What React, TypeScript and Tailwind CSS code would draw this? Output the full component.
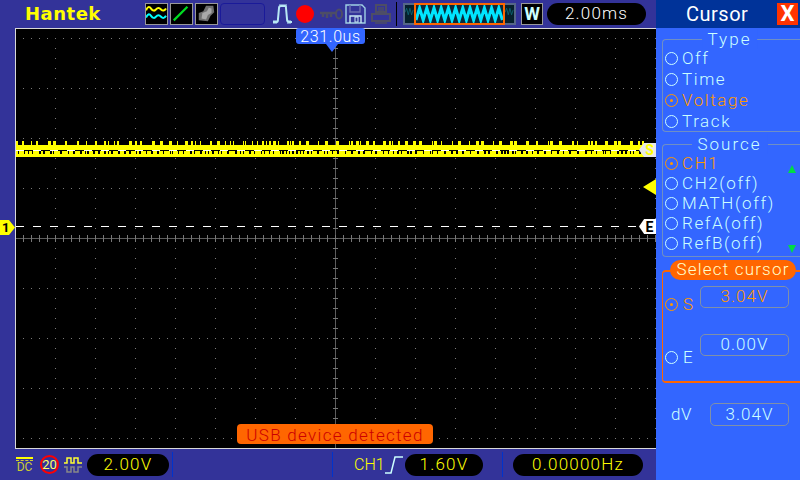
import React from 'react';

// Screen geometry: graticule centre sits at (319, 209) inside the svg
const SW = 640;
const SH = 419;

function rand(seed: number) {
  const x = Math.sin(seed * 12.9898) * 43758.5453;
  return x - Math.floor(x);
}

const Graticule = () => {
  const dots: React.ReactNode[] = [];
  for (let r = 0; r < 9; r++) {
    const y = 9 + r * 50;
    for (let x = 7; x < SW; x += 8) dots.push(<rect key={`h${r}-${x}`} x={x} y={y} width="1" height="1" fill="#7a7a7a" />);
  }
  for (let c = 1; c < 17; c++) {
    const x = c * 40 - 1;
    for (let y = 9; y < SH; y += 10) dots.push(<rect key={`v${c}-${y}`} x={x} y={y} width="1" height="1" fill="#7a7a7a" />);
  }
  const ticks: React.ReactNode[] = [];
  for (let x = 7; x < SW; x += 8) ticks.push(<rect key={`t${x}`} x={x} y={206} width="1" height="7" fill="#777" />);
  for (let y = 9; y < SH; y += 10) ticks.push(<rect key={`u${y}`} x={317} y={y} width="5" height="1" fill="#777" />);
  return (
    <>
      {dots}
      <rect x="0" y="209" width={SW} height="1" fill="#5c5c5c" />
      <rect x="319" y="0" width="1" height={SH} fill="#5c5c5c" />
      {ticks}
    </>
  );
};

// noisy blocks of a given height, used for the trace fuzz
const Fuzz = ({ y, h, seed, gap, maxW }: { y: number; h: number; seed: number; gap: number; maxW: number }) => {
  const out: React.ReactNode[] = [];
  let x = 0;
  let i = seed;
  while (x < SW - 4) {
    const w = 1 + Math.floor(rand(i++) * maxW);
    out.push(<rect key={x} x={x} y={y} width={w} height={h} fill="#ffff00" />);
    x += w + 1 + Math.floor(rand(i++) * gap);
  }
  return <>{out}</>;
};

const Trace = () => {
  const dashes: React.ReactNode[] = [];
  for (let x = 0; x < SW - 16; x += 17) dashes.push(<rect key={x} x={x} y={121} width="8" height="1" fill="#ffffff" />);
  return (
    <>
      <rect x="0" y="116" width={SW} height="5" fill="#ffff00" />
      <rect x="0" y="125" width={SW} height="3" fill="#ffff00" />
      <Fuzz y={112} h={4} seed={3} gap={10} maxW={3} />
      <Fuzz y={122} h={3} seed={900} gap={2} maxW={6} />
      {dashes}
    </>
  );
};

const TriggerDashes = () => {
  const d: React.ReactNode[] = [];
  for (let x = 0; x < 623; x += 17) d.push(<rect key={x} x={x} y={197} width="8" height="1" fill="#ffffff" />);
  return <>{d}</>;
};

const Radio = ({ on }: { on?: boolean }) => (
  <span className={`flex h-[13px] w-[13px] shrink-0 items-center justify-center rounded-full border ${on ? 'border-[#ff9900]' : 'border-[#ccffff]'}`}>
    {on && <span className="h-[3px] w-[3px] rounded-full bg-[#ff9900]" />}
  </span>
);

const Option = ({ label, on, tall }: { label: string; on?: boolean; tall?: boolean }) => (
  <div className={`flex items-center gap-[4px] pl-[2px] text-[17px] tracking-[1.6px] ${tall ? 'h-[21px]' : 'h-5'} ${on ? 'text-[#ff9900]' : 'text-[#ccffff]'}`}>
    <Radio on={on} />
    <span className="whitespace-pre leading-none">{label}</span>
  </div>
);

const GroupBox = ({ title, className, children }: { title: string; className: string; children: React.ReactNode }) => (
  <div className={`relative ml-[6px] rounded-tl-[4px] rounded-bl-[4px] border-t border-l border-b border-[#6f8fc4] ${className}`}>
    <span className="absolute -top-[11px] left-[calc(50%-2px)] -translate-x-1/2 bg-[#3366ff] px-[6px] text-[17px] leading-[20px] tracking-[2px] text-[#ccffff]">{title}</span>
    {children}
  </div>
);

const ValueBox = ({ value, orange, className }: { value: string; orange?: boolean; className: string }) => (
  <div className={`flex items-center justify-center rounded-[5px] border border-[#8090a8] text-[17px] tracking-[1px] ${orange ? 'text-[#ff9900]' : 'text-[#ccffff]'} ${className}`}>{value}</div>
);

const Pill = ({ children, className }: { children: React.ReactNode; className: string }) => (
  <div className={`flex h-[22px] items-center justify-center rounded-full bg-black text-[17px] tracking-[1.2px] ${className}`}>{children}</div>
);

const Divider = ({ className }: { className: string }) => <div className={`h-[25px] w-px shrink-0 bg-[#0033cc] ${className}`} />;

export default function App() {
  return (
    <div className="flex h-[480px] w-[800px] overflow-hidden bg-[#333399] font-light text-[#ccffff]" style={{ fontFamily: 'Roboto, "Liberation Sans", Arial, sans-serif' }}>
      <div className="flex w-[656px] shrink-0 flex-col">
        {/* top toolbar */}
        <div className="relative flex h-[28px] items-center">
          <span className="ml-[25px] w-[120px] text-[18px] font-bold leading-none tracking-[0.5px] text-[#ffff00]" style={{ fontFamily: '"DejaVu Sans", sans-serif' }}>Hantek</span>
          <div className="flex items-center gap-[2px]">
            <svg width="23" height="22" viewBox="0 0 23 22" className="border border-[#999] bg-black">
              <path d="M0 7 Q2.5 1 5.5 5 T11 6 T16.5 6 T22 5" stroke="#ffff00" strokeWidth="2.2" fill="none" />
              <path d="M0 15 Q2.5 9 5.5 13 T11 14 T16.5 14 T22 13" stroke="#00ffff" strokeWidth="2.2" fill="none" />
            </svg>
            <svg width="23" height="22" viewBox="0 0 23 22" className="border border-[#999] bg-black">
              <path d="M3 18 L18 3" stroke="#00dd22" strokeWidth="2.4" />
            </svg>
            <svg width="23" height="22" viewBox="0 0 23 22" className="border border-[#999] bg-black">
              <path d="M3 18 L3 10 L8 8 L11 2 L19 2 L20 9 L16 13 L13 19 Z" fill="#707070" />
              <path d="M6 16 L7 10 L12 8 L14 4 L17 5 L17 10 L13 12 L11 17 Z" fill="#a8a8a8" />
            </svg>
          </div>
          <div className="ml-[2px] h-[22px] w-[45px] rounded-[4px] border border-[#1a1a99]" />
          <svg width="21" height="20" viewBox="0 0 21 20" className="ml-[7px]">
            <path d="M1 18 H5 Q6 18 6 15 L7 4 Q7 2 9 2 H13 Q14 2 14 4 L15 15 Q15 18 17 18 H20" stroke="#b8e8f4" strokeWidth="2" fill="none" />
            <path d="M8 0 V3 M10 0 V3 M12 0 V3 M14 0 V3 M2 16 V20 M4 16 V20 M16 16 V20 M18 16 V20" stroke="#b8e8f4" strokeWidth="1" />
          </svg>
          <div className="ml-[3px] h-[18px] w-[18px] rounded-full bg-[#ff0000]" />
          <svg width="23" height="12" viewBox="0 0 23 12" className="ml-[6px]">
            <ellipse cx="19" cy="6" rx="3" ry="4.5" stroke="#4d4d66" strokeWidth="2" fill="none" />
            <path d="M0 5 H16 M3 5 V9 M7 5 V10 M11 5 V9" stroke="#4d4d66" strokeWidth="2.5" fill="none" />
          </svg>
          <svg width="21" height="20" viewBox="0 0 21 20" className="ml-[2px]">
            <path d="M1 1 H17 L20 4 V19 H1 Z" stroke="#9fd0e4" strokeWidth="1.4" fill="none" />
            <path d="M5 1 V8 H15 V1" stroke="#6a6fb0" strokeWidth="1.4" fill="none" />
            <path d="M5 19 V12 H16 V19" stroke="#c8e8f4" strokeWidth="1.4" fill="none" />
            <rect x="10" y="13" width="3" height="5" fill="#333399" stroke="#c8e8f4" strokeWidth="1" />
          </svg>
          <svg width="20" height="20" viewBox="0 0 20 20" className="ml-[5px]">
            <path d="M5 1 H15 V8 H5 Z M1 10 H19 V17 H1 Z" stroke="#4d4d66" strokeWidth="2" fill="none" />
            <path d="M7 4 H13 M7 6 H13 M4 19 H16" stroke="#4d4d66" strokeWidth="1.5" fill="none" />
          </svg>
          <div className="ml-[5px] h-[24px] w-px bg-black" />
          <div className="ml-[6px] flex h-[22px] items-center rounded-[2px] bg-[#556688]">
            <svg width="11" height="22" viewBox="0 0 11 22" className="border-y-2 border-l-2 border-[#556688] bg-[#06202c]">
              <path d="M0 9 L2 4 L4 12 L6 4 L8 12 L10 6" stroke="#0c6a78" strokeWidth="1" fill="none" />
            </svg>
            <svg width="91" height="22" viewBox="0 0 87 18" className="border-2 border-[#ff6600] bg-[#0b2a3a]">
              <path d="M0 15 L3.6 3 L7.2 15 L10.8 3 L14.4 15 L18 3 L21.6 15 L25.2 3 L28.8 15 L32.4 3 L36 15 L39.6 3 L43.2 15 L46.8 3 L50.4 15 L54 3 L57.6 15 L61.2 3 L64.8 15 L68.4 3 L72 15 L75.6 3 L79.2 15 L82.8 3 L86.4 15" stroke="#00e5ff" strokeWidth="3" fill="none" />
            </svg>
            <svg width="11" height="22" viewBox="0 0 11 22" className="border-y-2 border-r-2 border-[#556688] bg-[#06202c]">
              <path d="M0 9 L2 4 L4 12 L6 4 L8 12 L10 6" stroke="#0c6a78" strokeWidth="1" fill="none" />
            </svg>
          </div>
          <div className="ml-[5px] flex h-[22px] w-[22px] items-center justify-center border border-[#999] bg-black text-[18px] font-bold leading-none text-[#ccffff]">W</div>
          <Pill className="ml-[4px] w-[99px] text-white">2.00ms</Pill>
        </div>

        {/* scope screen */}
        <div className="relative ml-[15px] h-[421px] border-t border-l border-b border-[#d8d8d8] bg-black">
          <svg width={SW} height={SH} viewBox={`0 0 ${SW} ${SH}`} className="block" shapeRendering="crispEdges">
            <Graticule />
            <Trace />
            <TriggerDashes />
          </svg>

          <div className="absolute -top-px left-[280px] flex h-[16px] w-[69px] items-center justify-center rounded-[3px] bg-[#3366ff] pt-px text-[16px] leading-none tracking-[0.6px] text-white">231.0us</div>
          <div className="absolute left-[310px] top-[15px] h-0 w-0 border-x-[6px] border-t-[8px] border-x-transparent border-t-[#3366ff]" />

          <div className="absolute left-[221px] top-[395px] flex h-[20px] w-[196px] items-center justify-center rounded-[4px] bg-[#ff6600] pt-[3px] text-[17px] leading-none tracking-[1.3px] text-[#cc0000]">USB device detected</div>

          <div className="absolute -left-[16px] top-[191px] flex h-[15px] w-[15px] items-center bg-[#ffff00] pl-[2px] text-[13px] font-bold leading-none text-black" style={{ clipPath: 'polygon(0 0, 60% 0, 100% 50%, 60% 100%, 0 100%)' }}>1</div>
          <div className="absolute right-0 top-[114px] flex h-[14px] w-[17px] items-center justify-center bg-[#e8e8e8] pl-[4px] text-[14px] font-bold leading-none text-[#ffff00]" style={{ clipPath: 'polygon(0 50%, 30% 0, 100% 0, 100% 100%, 30% 100%)' }}>S</div>
          <div className="absolute right-0 top-[150px] h-0 w-0 border-y-[8px] border-r-[13px] border-y-transparent border-r-[#ffff00]" />
          <div className="absolute right-0 top-[190px] flex h-[15px] w-[17px] items-center justify-center bg-white pl-[4px] text-[14px] font-bold leading-none text-black" style={{ clipPath: 'polygon(0 50%, 30% 0, 100% 0, 100% 100%, 30% 100%)' }}>E</div>
        </div>

        {/* bottom status bar */}
        <div className="flex h-[31px] items-center text-[#ffff00]">
          <div className="ml-[16px] flex w-[17px] flex-col items-center text-[#cccc33]">
            <div className="h-[2px] w-[17px] bg-[#ffff00]" />
            <div className="mt-[1px] h-px w-[17px] border-t border-dashed border-[#cccc33]" />
            <span className="text-[12px] font-normal leading-[12px]">DC</span>
          </div>
          <div className="ml-[7px] flex h-[19px] w-[19px] items-center justify-center rounded-full border-2 border-[#ff0000] text-[13px] font-normal leading-none text-[#ffff66]">20</div>
          <svg width="18" height="18" viewBox="0 0 18 18" className="ml-[5px]">
            <path d="M0 7 H3 V2 H7 V7 H10 V2 H14 V7 H18" stroke="#ffff33" strokeWidth="1.5" fill="none" />
            <path d="M0 11 H3 V16 H7 V11 H10 V16 H14 V11 H18" stroke="#888" strokeWidth="1.5" fill="none" />
          </svg>
          <Pill className="ml-[5px] w-[82px]">2.00V</Pill>
          <Divider className="ml-[3px]" />
          <Divider className="ml-[159px]" />
          <span className="ml-[21px] w-[26px] text-[16px] leading-none">CH1</span>
          <svg width="20" height="20" viewBox="0 0 20 20" className="ml-[5px]">
            <path d="M0 18 H6 L10 2 H18" stroke="#ccffff" strokeWidth="1.5" fill="none" />
          </svg>
          <Pill className="w-[78px]">1.60V</Pill>
          <Divider className="ml-[19px]" />
          <Pill className="ml-[10px] w-[130px]">0.00000Hz</Pill>
        </div>
      </div>

      {/* cursor menu */}
      <div className="flex w-[144px] shrink-0 flex-col bg-[#3366ff]">
        <div className="flex h-[28px] shrink-0 items-center bg-[#003399] pl-[30px] pr-[2px] text-white">
          <span className="flex-1 text-[20px] font-normal leading-none tracking-[0.5px]">Cursor</span>
          <span className="flex h-[22px] w-[21px] items-center justify-center bg-[#ff3300] text-[22px] font-bold leading-none text-white">X</span>
        </div>
        <GroupBox title="Type" className="mt-[11px] h-[93px] pt-[8px]">
          <Option label="Off" tall />
          <Option label="Time" tall />
          <Option label="Voltage" on tall />
          <Option label="Track" tall />
        </GroupBox>
        <GroupBox title="Source" className="mt-[12px] h-[113px] pt-[8px]">
          <Option label="CH1" on />
          <Option label="CH2(off)" />
          <Option label="MATH(off)" />
          <Option label="RefA(off)" />
          <Option label="RefB(off)" />
          <div className="absolute right-[4px] top-[20px] h-0 w-0 border-x-[4px] border-b-[8px] border-x-transparent border-b-[#00dd44]" />
          <div className="absolute right-[4px] top-[100px] h-0 w-0 border-x-[4px] border-t-[8px] border-x-transparent border-t-[#00dd44]" />
        </GroupBox>
        <div className="relative ml-[6px] mt-[13px] h-[113px] rounded-tl-[4px] rounded-bl-[4px] border-t-2 border-l border-b-2 border-[#ff6600]">
          <span className="absolute -top-[12px] left-[7px] flex h-[20px] w-[126px] items-center justify-center rounded-full bg-[#ff6600] text-[17px] tracking-[1.2px] text-[#ffffcc]">Select cursor</span>
          <div className="mt-[14px] flex">
            <div className="mt-[8px] flex h-5 w-[37px] items-center gap-[5px] pl-[2px] text-[17px] text-[#ff9900]"><Radio on /><span className="leading-none">S</span></div>
            <ValueBox value="3.04V" orange className="h-[22px] w-[89px]" />
          </div>
          <div className="mt-[20px] flex">
            <div className="mt-[13px] flex h-5 w-[37px] items-center gap-[5px] pl-[2px] text-[17px]"><Radio /><span className="leading-none">E</span></div>
            <ValueBox value="0.00V" className="h-[22px] w-[89px]" />
          </div>
        </div>
        <div className="mt-[20px] flex items-center">
          <span className="ml-[15px] w-[39px] text-[17px] leading-none tracking-[0.5px]">dV</span>
          <ValueBox value="3.04V" className="h-[23px] w-[79px]" />
        </div>
      </div>
    </div>
  );
}
